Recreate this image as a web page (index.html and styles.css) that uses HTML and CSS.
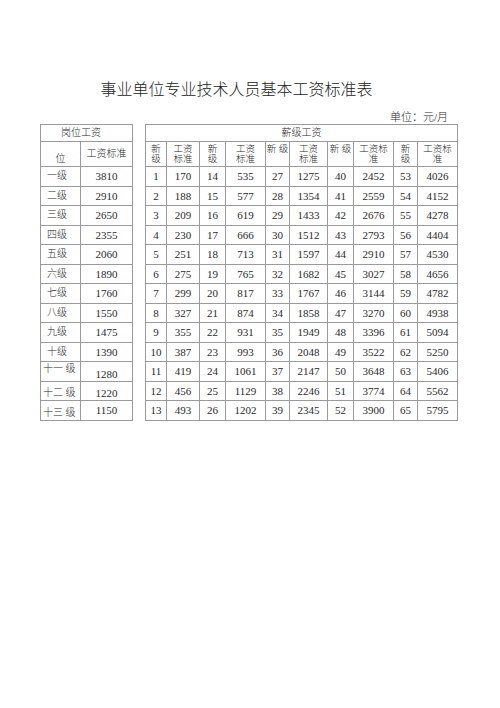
FILE: index.html
```html
<!DOCTYPE html>
<html lang="zh">
<head>
<meta charset="utf-8">
<title>事业单位专业技术人员基本工资标准表</title>
<link rel="stylesheet" href="styles.css">
</head>
<body>
<div class="page">
  <h1 class="title">事业单位专业技术人员基本工资标准表</h1>
  <div class="unit">单位：元/月</div>
  <div class="tables">
    <table class="tbl left">
      <colgroup><col class="c40"><col class="c52"></colgroup>
      <tr class="h1"><td colspan="2" class="gang">岗位工资</td></tr>
      <tr class="h2"><td class="wei">位</td><td>工资标准</td></tr>
      <tr><td class="lbl">一级</td><td>3810</td></tr>
      <tr><td class="lbl">二级</td><td>2910</td></tr>
      <tr><td class="lbl">三级</td><td>2650</td></tr>
      <tr><td class="lbl">四级</td><td>2355</td></tr>
      <tr><td class="lbl">五级</td><td>2060</td></tr>
      <tr><td class="lbl">六级</td><td>1890</td></tr>
      <tr><td class="lbl">七级</td><td>1760</td></tr>
      <tr><td class="lbl">八级</td><td>1550</td></tr>
      <tr><td class="lbl">九级</td><td>1475</td></tr>
      <tr><td class="lbl">十级</td><td>1390</td></tr>
      <tr><td class="lbl top tight">十一 级</td><td class="low">1280</td></tr>
      <tr><td class="lbl low tight">十二 级</td><td class="low">1220</td></tr>
      <tr><td class="lbl low tight">十三 级</td><td>1150</td></tr>
    </table>
    <table class="tbl right">
      <colgroup>
        <col class="w21"><col class="w33"><col class="w26"><col class="w40"><col class="w24">
        <col class="w38"><col class="w26"><col class="w40"><col class="w24"><col class="w40">
      </colgroup>
      <tr class="h1"><td colspan="10" class="xin">薪级工资</td></tr>
      <tr class="h2 hd">
        <td>新<br>级</td><td>工资<br>标准</td><td>新<br>级</td><td>工资<br>标准</td><td class="nw">新 级</td>
        <td>工资<br>标准</td><td class="nw">新 级</td><td>工资标<br>准</td><td>新<br>级</td><td>工资标<br>准</td>
      </tr>
      <tr><td>1</td><td>170</td><td>14</td><td>535</td><td>27</td><td>1275</td><td>40</td><td>2452</td><td>53</td><td>4026</td></tr>
      <tr><td>2</td><td>188</td><td>15</td><td>577</td><td>28</td><td>1354</td><td>41</td><td>2559</td><td>54</td><td>4152</td></tr>
      <tr><td>3</td><td>209</td><td>16</td><td>619</td><td>29</td><td>1433</td><td>42</td><td>2676</td><td>55</td><td>4278</td></tr>
      <tr><td>4</td><td>230</td><td>17</td><td>666</td><td>30</td><td>1512</td><td>43</td><td>2793</td><td>56</td><td>4404</td></tr>
      <tr><td>5</td><td>251</td><td>18</td><td>713</td><td>31</td><td>1597</td><td>44</td><td>2910</td><td>57</td><td>4530</td></tr>
      <tr><td>6</td><td>275</td><td>19</td><td>765</td><td>32</td><td>1682</td><td>45</td><td>3027</td><td>58</td><td>4656</td></tr>
      <tr><td>7</td><td>299</td><td>20</td><td>817</td><td>33</td><td>1767</td><td>46</td><td>3144</td><td>59</td><td>4782</td></tr>
      <tr><td>8</td><td>327</td><td>21</td><td>874</td><td>34</td><td>1858</td><td>47</td><td>3270</td><td>60</td><td>4938</td></tr>
      <tr><td>9</td><td>355</td><td>22</td><td>931</td><td>35</td><td>1949</td><td>48</td><td>3396</td><td>61</td><td>5094</td></tr>
      <tr><td>10</td><td>387</td><td>23</td><td>993</td><td>36</td><td>2048</td><td>49</td><td>3522</td><td>62</td><td>5250</td></tr>
      <tr><td>11</td><td>419</td><td>24</td><td>1061</td><td>37</td><td>2147</td><td>50</td><td>3648</td><td>63</td><td>5406</td></tr>
      <tr><td>12</td><td>456</td><td>25</td><td>1129</td><td>38</td><td>2246</td><td>51</td><td>3774</td><td>64</td><td>5562</td></tr>
      <tr><td>13</td><td>493</td><td>26</td><td>1202</td><td>39</td><td>2345</td><td>52</td><td>3900</td><td>65</td><td>5795</td></tr>
    </table>
  </div>
</div>
</body>
</html>
```
FILE: styles.css
```css
html, body {
  margin: 0;
  padding: 0;
  background: #ffffff;
}
body {
  font-family: "Liberation Serif", "Noto Sans CJK SC", serif;
  color: #2a2a2a;
}
.page {
  width: 500px;
  height: 708px;
  box-sizing: border-box;
  padding-top: 80px;
  overflow: hidden;
}
.title {
  margin: 0;
  padding-right: 27px;
  font-size: 16px;
  line-height: 20px;
  font-weight: 300;
  text-align: center;
  color: #222;
}
.unit {
  margin-top: 10px;
  padding-right: 52px;
  text-align: right;
  font-size: 11px;
  line-height: 14px;
  font-weight: 300;
}
.tables {
  display: flex;
  align-items: flex-start;
  gap: 12px;
  padding-left: 40px;
}
.tbl {
  border-collapse: collapse;
  table-layout: fixed;
}
.tbl td {
  border: 1px solid #9a9a9a;
  padding: 0;
  text-align: center;
  vertical-align: middle;
  font-size: 11px;
  line-height: 12px;
  height: 19.5px;
  box-sizing: border-box;
  white-space: nowrap;
  overflow: hidden;
  font-weight: 300;
}
.left { width: 93px; }
.right { width: 313px; }
.c40 { width: 40px; }
.c52 { width: 52px; }
.w21 { width: 21px; }
.w24 { width: 24px; }
.w26 { width: 26px; }
.w33 { width: 33px; }
.w38 { width: 38px; }
.w40 { width: 40px; }
.tbl tr.h1 td {
  height: 17px;
  font-size: 10px;
}
.tbl tr.h2 td {
  height: 25px;
  font-size: 10px;
}
.gang {
  text-align: left !important;
  padding-left: 20px !important;
}
.wei {
  vertical-align: bottom !important;
  padding-bottom: 1px !important;
}
.hd td {
  vertical-align: top !important;
  font-size: 9.5px !important;
  line-height: 10px !important;
  padding-top: 2px !important;
}
.lbl {
  text-align: left !important;
  padding-left: 6px !important;
  font-size: 10px !important;
}
.tight {
  padding-left: 2px !important;
}
.top {
  vertical-align: top !important;
  padding-top: 1px !important;
}
.low {
  vertical-align: bottom !important;
  padding-bottom: 1px !important;
}
```
